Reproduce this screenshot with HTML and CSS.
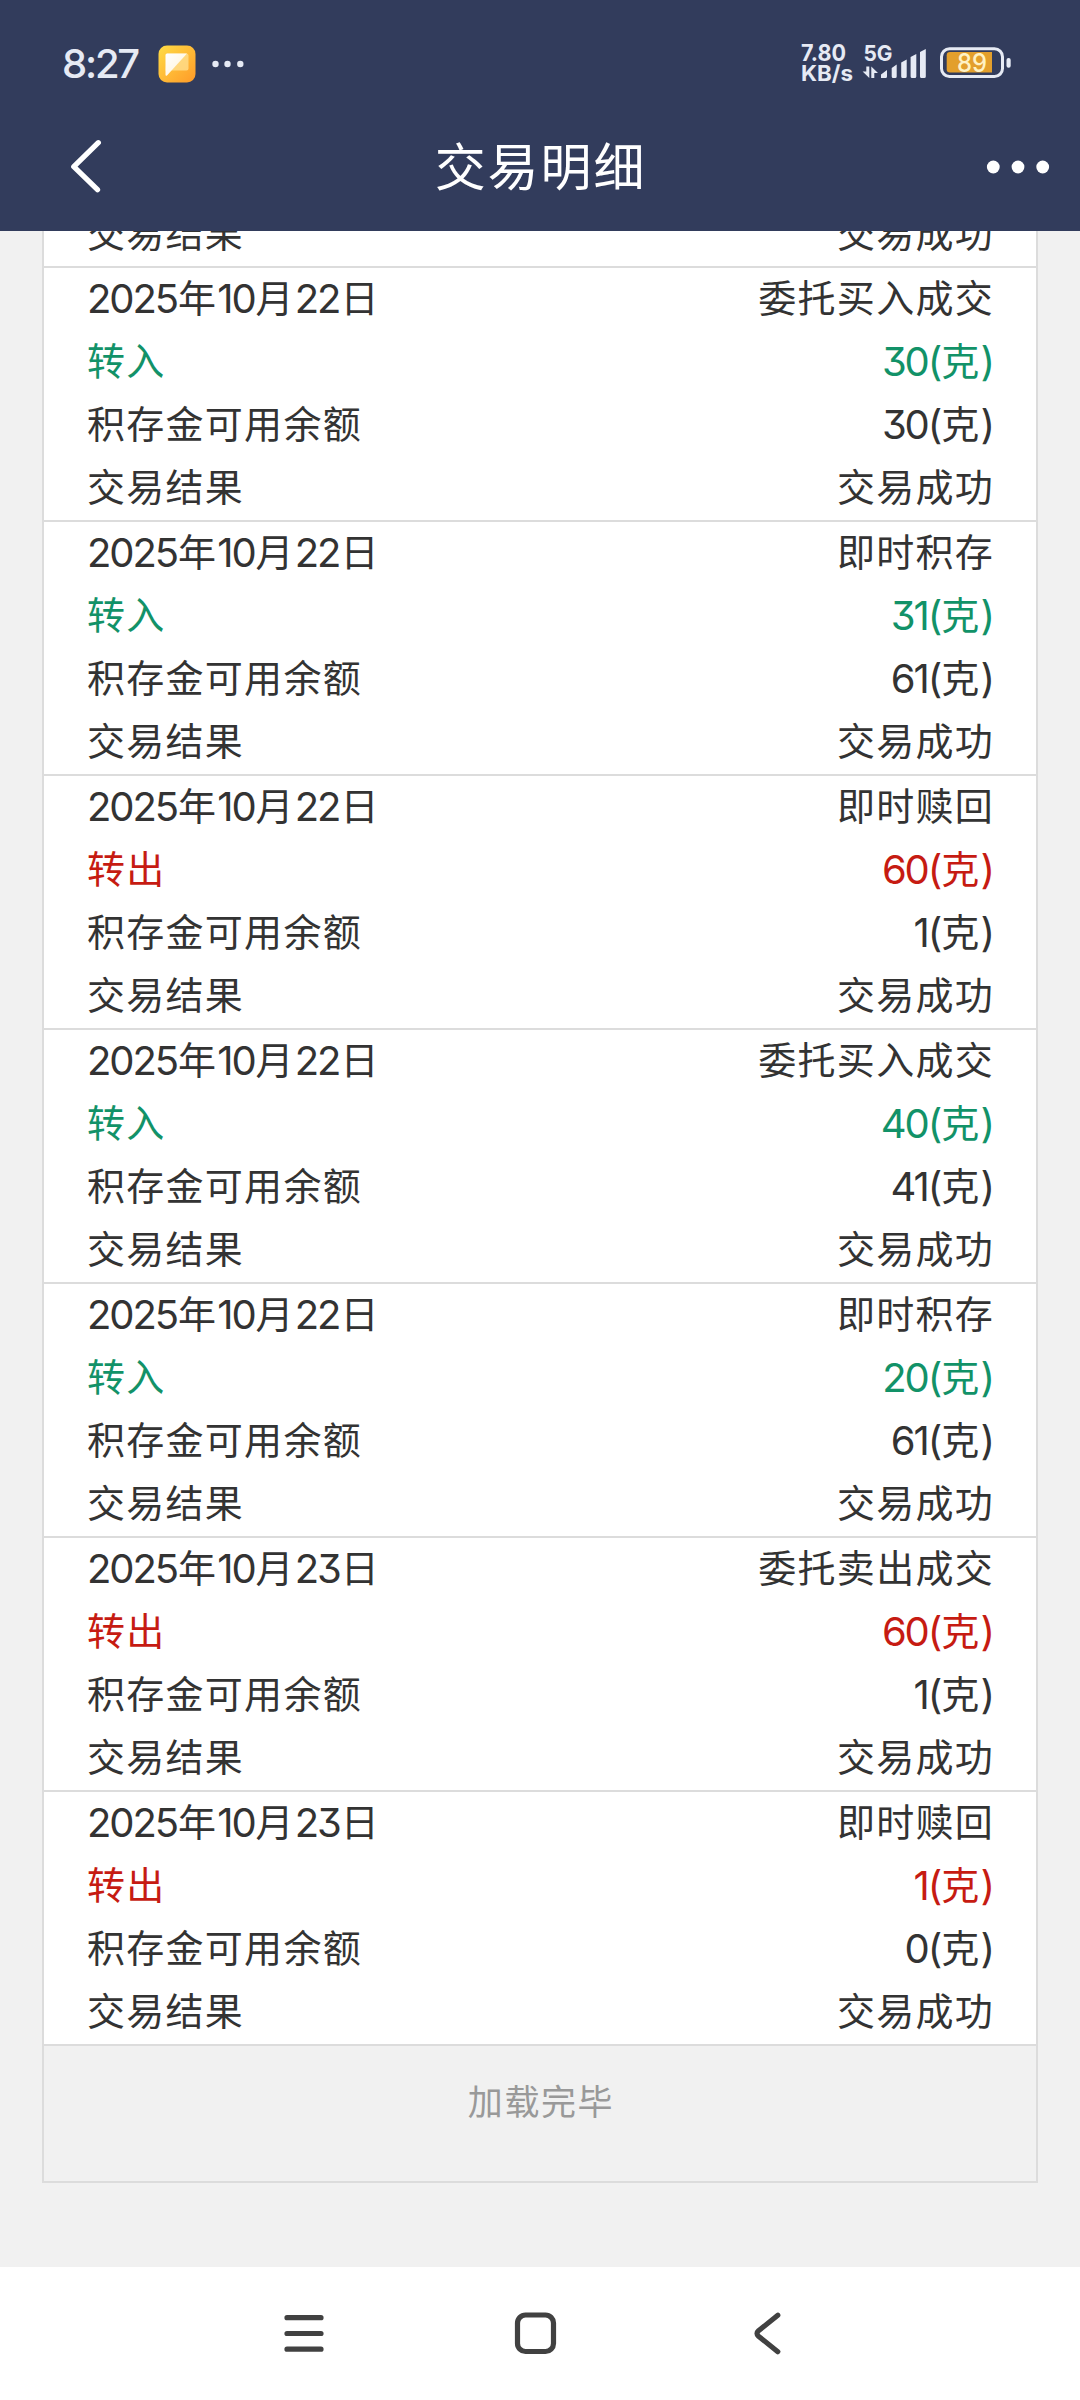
FILE: index.html
```html
<!DOCTYPE html>
<html lang="zh-CN">
<head>
<meta charset="utf-8">
<title>交易明细</title>
<link rel="stylesheet" href="styles.css">
</head>
<body>
<div class="screen">
  <header class="top">
    <div class="status">
      <div class="status-left">
        <span class="clock">8:27</span>
        <svg class="app-icon" width="38" height="38" viewBox="0 0 38 38">
          <defs>
            <linearGradient id="tile" x1="0" y1="0" x2="1" y2="1"><stop offset="0" stop-color="#ffdc45"/><stop offset="1" stop-color="#ff9a28"/></linearGradient>
            <linearGradient id="flap" x1="0" y1="0" x2="1" y2="1"><stop offset="0" stop-color="#fff"/><stop offset="1" stop-color="#fff3d6"/></linearGradient>
          </defs>
          <rect x="0.5" y="0.5" width="37" height="37" rx="8.5" fill="url(#tile)"/>
          <path d="M9 8.500h19.500a2 2 0 0 1 2 2v13a2 2 0 0 1-2 2H7.500z" fill="#ffdf8e" opacity=".8"/>
          <path d="M7.500 10a1.500 1.500 0 0 1 1.500-1.500H29L9 30.500q-1.500 1-1.500-1z" fill="url(#flap)"/>
        </svg>
        <svg class="more-dots" width="32" height="8" viewBox="0 0 32 8" fill="#e6eaf4"><circle cx="3.500" cy="4" r="3.200"/><circle cx="15.500" cy="4" r="3.200"/><circle cx="28.300" cy="4" r="3.200"/></svg>
      </div>
      <svg class="status-right" width="212" height="60" viewBox="800 35 212 60" fill="#e6eaf4">
        <g class="tiny">
          <text x="801" y="62" font-size="23" textLength="45" lengthAdjust="spacingAndGlyphs">7.80</text>
          <text x="801" y="81.500" font-size="21.500" textLength="52" lengthAdjust="spacingAndGlyphs">KB/s</text>
          <text x="863.500" y="61.500" font-size="22" textLength="29" lengthAdjust="spacingAndGlyphs">5G</text>
        </g>
        <path d="M866.300 67.500h3v11.500l-6.700-6.500h3.700zM871.300 79V67.500l6.700 6.500h-3.700v5z"/>
        <path d="M881 79v-3.500l6-4.500v6.500q0 1.500-1.500 1.500zM891.700 77.500V69l5-3.500v12q0 1.500-1.500 1.500h-2q-1.500 0-1.500-1.500zM901.200 77.500V63.500l5.500-3v17q0 1.500-1.500 1.500h-2.500q-1.500 0-1.500-1.500zM910.600 77.500V58l5.700-3v22.500q0 1.500-1.500 1.500h-2.700q-1.500 0-1.500-1.500zM920 77.500V53l5.800-3v27.500q0 1.500-1.500 1.500h-2.800q-1.500 0-1.500-1.500z"/>
        <rect x="941.500" y="49.800" width="61" height="27.700" rx="8" fill="none" stroke="#e6eaf4" stroke-width="3"/>
        <path d="M950 53h42v20.500h-42q-3.300 0-3.300-3.300V56.300q0-3.300 3.300-3.300z" fill="#e39f2c"/>
        <rect x="1006.500" y="59" width="4.200" height="9.700" rx="2"/>
        <text class="level" x="957" y="73.200" textLength="30" lengthAdjust="spacingAndGlyphs">89</text>
      </svg>
    </div>
    <div class="titlebar">
      <svg width="32" height="56" viewBox="70 139 32 56"><path d="M98.300 142.700L73.800 166.700L97.500 189.700" fill="none" stroke="#fff" stroke-width="5.300" stroke-linecap="round" stroke-linejoin="round"/></svg>
      <h1 class="title">交易明细</h1>
      <svg width="64" height="14" viewBox="0 0 64 14" fill="#fff"><circle cx="7.300" cy="7" r="6.400"/><circle cx="32" cy="7" r="6.400"/><circle cx="56.700" cy="7" r="6.400"/></svg>
    </div>
  </header>

  <main class="content">
    <div class="list">
      <section class="record cut">
        <div class="row"><span>交易结果</span><span>交易成功</span></div>
      </section>
      <section class="record">
        <div class="row"><span><i>2025</i>年<i>10</i>月<i>22</i>日</span><span>委托买入成交</span></div>
        <div class="row in"><span>转入</span><span><i>30(</i>克<i>)</i></span></div>
        <div class="row"><span>积存金可用余额</span><span><i>30(</i>克<i>)</i></span></div>
        <div class="row"><span>交易结果</span><span>交易成功</span></div>
      </section>
      <section class="record">
        <div class="row"><span><i>2025</i>年<i>10</i>月<i>22</i>日</span><span>即时积存</span></div>
        <div class="row in"><span>转入</span><span><i>31(</i>克<i>)</i></span></div>
        <div class="row"><span>积存金可用余额</span><span><i>61(</i>克<i>)</i></span></div>
        <div class="row"><span>交易结果</span><span>交易成功</span></div>
      </section>
      <section class="record">
        <div class="row"><span><i>2025</i>年<i>10</i>月<i>22</i>日</span><span>即时赎回</span></div>
        <div class="row out"><span>转出</span><span><i>60(</i>克<i>)</i></span></div>
        <div class="row"><span>积存金可用余额</span><span><i>1(</i>克<i>)</i></span></div>
        <div class="row"><span>交易结果</span><span>交易成功</span></div>
      </section>
      <section class="record">
        <div class="row"><span><i>2025</i>年<i>10</i>月<i>22</i>日</span><span>委托买入成交</span></div>
        <div class="row in"><span>转入</span><span><i>40(</i>克<i>)</i></span></div>
        <div class="row"><span>积存金可用余额</span><span><i>41(</i>克<i>)</i></span></div>
        <div class="row"><span>交易结果</span><span>交易成功</span></div>
      </section>
      <section class="record">
        <div class="row"><span><i>2025</i>年<i>10</i>月<i>22</i>日</span><span>即时积存</span></div>
        <div class="row in"><span>转入</span><span><i>20(</i>克<i>)</i></span></div>
        <div class="row"><span>积存金可用余额</span><span><i>61(</i>克<i>)</i></span></div>
        <div class="row"><span>交易结果</span><span>交易成功</span></div>
      </section>
      <section class="record">
        <div class="row"><span><i>2025</i>年<i>10</i>月<i>23</i>日</span><span>委托卖出成交</span></div>
        <div class="row out"><span>转出</span><span><i>60(</i>克<i>)</i></span></div>
        <div class="row"><span>积存金可用余额</span><span><i>1(</i>克<i>)</i></span></div>
        <div class="row"><span>交易结果</span><span>交易成功</span></div>
      </section>
      <section class="record">
        <div class="row"><span><i>2025</i>年<i>10</i>月<i>23</i>日</span><span>即时赎回</span></div>
        <div class="row out"><span>转出</span><span><i>1(</i>克<i>)</i></span></div>
        <div class="row"><span>积存金可用余额</span><span><i>0(</i>克<i>)</i></span></div>
        <div class="row"><span>交易结果</span><span>交易成功</span></div>
      </section>
      <div class="done">加载完毕</div>
    </div>
  </main>

  <nav class="nav">
    <svg width="44" height="46" viewBox="282 2310 44 46"><path d="M287 2317.700h34M287 2333.500h34M287 2349.200h34"/></svg>
    <svg width="46" height="46" viewBox="512 2310 46 46"><rect x="517.500" y="2315" width="36" height="36.500" rx="8"/></svg>
    <svg width="30" height="46" viewBox="752 2310 30 46"><path d="M777.800 2315.200L758.500 2330.800Q755.500 2333.500 758.500 2336.200L777.800 2351.700"/></svg>
  </nav>
</div>
</body>
</html>
```

FILE: styles.css
```css
* { box-sizing: border-box; }

body {
  margin: 0;
  font-family: "Noto Sans CJK SC", sans-serif;
  color: #333;
}

svg { display: block; flex: none; }

.screen {
  width: 1080px;
  height: 2400px;
  display: flex;
  flex-direction: column;
  overflow: hidden;
  background: #f1f1f1;
}

.top {
  flex: none;
  height: 231px;
  background: #323c5c;
  color: #fff;
}

.status {
  height: 103px;
  padding: 25px 68px 0 62px;
  display: flex;
  justify-content: space-between;
  align-items: center;
}

.status-left { display: flex; align-items: center; }

.clock {
  width: 96px;
  font: 500 40px/1 Inter, sans-serif;
  letter-spacing: -2.200px;
  color: #e6eaf4;
  white-space: nowrap;
}

.more-dots { margin-left: 16px; }

.status text { font-family: Inter, sans-serif; font-weight: 700; }
.status text.level { font-size: 26px; font-weight: 500; fill: #fff2c4; }

.titlebar {
  height: 128px;
  padding: 0 30px 0 70px;
  display: grid;
  grid-template-columns: 64px 1fr 64px;
  align-items: center;
}

.title {
  margin: 0 0 6px 0;
  padding-right: 39px;
  text-align: center;
  font-size: 51px;
  font-weight: 400;
  line-height: 64px;
  letter-spacing: 1.900px;
}

.content {
  flex: 1;
  min-height: 0;
  padding: 0 42px;
  overflow: hidden;
}

.list { border: 2px solid #dcdcdc; border-top: 0; }

.record {
  padding: 0 42px 0 43px;
  background: #fff;
  border-bottom: 2px solid #dcdcdc;
}

.record.cut {
  height: 37px;
  display: flex;
  flex-direction: column;
  justify-content: flex-end;
}

.row {
  flex: none;
  height: 63px;
  display: flex;
  justify-content: space-between;
  font-size: 38px;
  line-height: 56px;
  letter-spacing: 1.280px;
  white-space: nowrap;
}

.row i {
  margin-right: 1px;
  font: 400 40px/0 Inter, sans-serif;
  font-feature-settings: "cv09";
  letter-spacing: -2.100px;
  vertical-align: -1px;
}

.in { color: #129268; }
.out { color: #c61b12; }

.done {
  height: 135px;
  padding: 26px 0 0 2px;
  text-align: center;
  font-size: 35px;
  line-height: 56px;
  letter-spacing: 1.600px;
  color: #999;
}

.nav {
  flex: none;
  height: 133px;
  padding: 0 298px 2px 282px;
  display: grid;
  grid-template-columns: 230px 240px 30px;
  align-items: center;
  background: #fff;
}

.nav svg {
  fill: none;
  stroke: #414141;
  stroke-width: 5.200;
  stroke-linecap: round;
  stroke-linejoin: round;
}
```
